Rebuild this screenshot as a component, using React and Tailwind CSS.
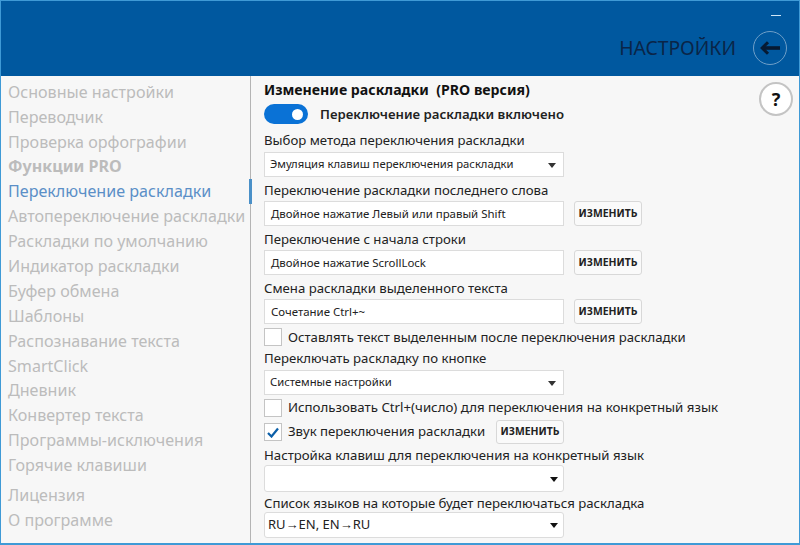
const FONT = "font-['Noto_Sans','Open_Sans',sans-serif]";

function Side({ children, bold, active }) {
  return (
    <div className={`relative h-[24.9px] pl-[7px] flex items-center text-[16.1px] leading-none whitespace-nowrap ${bold ? "font-bold" : ""} ${active ? "text-[#5b8fc7]" : "text-[#bcbcbc]"}`}>
      {children}
      {active && <span className="absolute right-[-2px] top-0 w-[3px] h-[25px] bg-[#4a90c8]" />}
    </div>
  );
}

function Label({ children, h }) {
  return <div className={`flex items-center text-[13.2px] leading-none text-[#222] whitespace-nowrap ${h}`}>{children}</div>;
}

function Caret({ dark }) {
  return (
    <svg width="8" height="5" viewBox="0 0 8 5" className={`absolute top-1/2 -mt-[2px] ${dark ? "right-[5px]" : "right-[7px]"}`}>
      <path d="M0 0h8L4 5z" fill={dark ? "#111" : "#333"} />
    </svg>
  );
}

function Select({ children }) {
  return (
    <div className="relative w-[300px] h-[25px] bg-white border border-[#dcdcdc] flex items-center pl-[5px] text-[11.25px] text-[#222] whitespace-nowrap">
      {children}
      <Caret />
    </div>
  );
}

function Combo({ children, h }) {
  return (
    <div className={`relative w-[300px] bg-white border border-[#dcdcdc] rounded-[3px] flex items-center pl-[3px] text-[13px] text-[#222] whitespace-nowrap ${h}`}>
      {children}
      <Caret dark />
    </div>
  );
}

function Btn({ h = "h-[25px]" }) {
  return (
    <button className={`w-[68px] ${h} bg-[#fafafa] border border-[#d8d8d8] rounded-[3px] flex items-center justify-center text-[10.4px] font-bold text-[#222] shrink-0`}>
      ИЗМЕНИТЬ
    </button>
  );
}

function Field({ children }) {
  return (
    <div className="flex gap-[10px]">
      <div className="w-[300px] h-[25px] bg-white border border-[#dcdcdc] flex items-center pl-[6px] text-[11.45px] text-[#222] whitespace-nowrap">
        {children}
      </div>
      <Btn />
    </div>
  );
}

function Check({ checked }) {
  return (
    <span className="w-[18px] h-[18px] bg-white border border-[#c4c4c4] flex items-center justify-center shrink-0">
      {checked && (
        <svg width="12" height="11" viewBox="0 0 12 11">
          <path d="M1 6l3.5 3.5L11 1.5" fill="none" stroke="#0b5fa8" strokeWidth="2.2" />
        </svg>
      )}
    </span>
  );
}

export default function App() {
  const items = ["Основные настройки", "Переводчик", "Проверка орфографии"];
  const rest = ["Автопереключение раскладки", "Раскладки по умолчанию", "Индикатор раскладки", "Буфер обмена", "Шаблоны", "Распознавание текста", "SmartClick", "Дневник", "Конвертер текста", "Программы-исключения", "Горячие клавиши"];
  return (
    <div className={`${FONT} w-[800px] h-[545px] flex flex-col overflow-hidden bg-[#f7f7f7] border-x border-b-2 border-[#3f9ad6]`}>
      <header className="h-[76px] shrink-0 -mx-px bg-[#00589f] border-t border-[#3f9ad6] relative flex items-center justify-end pr-[13px] pt-[18px]">
        <span className="absolute right-[19px] top-[14px] w-[10px] h-px bg-[#cfe6f7]" />
        <span className="text-[19.3px] leading-none text-[#0a2548] mr-[17px]">НАСТРОЙКИ</span>
        <span className="w-[34px] h-[34px] rounded-full border-[1.5px] border-[#6f9fc8] flex items-center justify-center">
          <svg width="20" height="14" viewBox="0 0 20 14">
            <path d="M8 1.2L2.2 7L8 12.8" fill="none" stroke="#061a33" strokeWidth="3" />
            <path d="M3 7h17" fill="none" stroke="#061a33" strokeWidth="3.6" />
          </svg>
        </span>
      </header>
      <div className="flex flex-1 min-h-0">
        <aside className="w-[250px] shrink-0 border-r border-[#b4b4b4] pt-[3.4px]">
          {items.map((t) => <Side key={t}>{t}</Side>)}
          <Side bold>Функции PRO</Side>
          <Side active>Переключение раскладки</Side>
          {rest.map((t) => <Side key={t}>{t}</Side>)}
          <div className="h-[5px]" />
          <Side>Лицензия</Side>
          <Side>О программе</Side>
        </aside>
        <main className="relative flex-1 pl-[13px] flex flex-col">
          <div className="h-[27px] flex items-center text-[14.15px] font-bold text-[#111] whitespace-nowrap">Изменение раскладки&nbsp; (PRO версия)</div>
          <div className="h-[22px] flex items-center gap-[12px]">
            <span className="w-[44px] h-[20px] rounded-full bg-[#0a72d6] relative shrink-0">
              <span className="absolute right-[5px] top-[4.5px] w-[11px] h-[11px] rounded-full bg-white" />
            </span>
            <span className="pt-[2px] text-[13.2px] font-semibold text-[#222] whitespace-nowrap">Переключение раскладки включено</span>
          </div>
          <Label h="h-[27px] pt-[5px]">Выбор метода переключения раскладки</Label>
          <Select>Эмуляция клавиш переключения раскладки</Select>
          <Label h="h-[24px] pt-[3px]">Переключение раскладки последнего слова</Label>
          <Field>Двойное нажатие Левый или правый Shift</Field>
          <Label h="h-[24px] pt-[3px]">Переключение с начала строки</Label>
          <Field>Двойное нажатие ScrollLock</Field>
          <Label h="h-[24px] pt-[3px]">Смена раскладки выделенного текста</Label>
          <Field>Сочетание Ctrl+~</Field>
          <div className="h-[26px] flex items-center gap-[6px] text-[13.15px] text-[#222] whitespace-nowrap"><Check /><span className="pt-[2px]">Оставлять текст выделенным после переключения раскладки</span></div>
          <Label h="h-[20px] pb-[2px]">Переключать раскладку по кнопке</Label>
          <Select>Системные настройки</Select>
          <div className="h-[25px] flex items-center gap-[6px] text-[13.28px] text-[#222] whitespace-nowrap"><Check />Использовать Ctrl+(число) для переключения на конкретный язык</div>
          <div className="h-[24px] flex items-center text-[13.2px] text-[#222] whitespace-nowrap">
            <Check checked />
            <span className="ml-[6px] w-[208px]">Звук переключения раскладки</span>
            <Btn h="h-[24px]" />
          </div>
          <Label h="h-[21px] pt-[2px]">Настройка клавиш для переключения на конкретный язык</Label>
          <Combo h="h-[27px]" />
          <Label h="h-[20px] pt-[3px]">Список языков на которые будет переключаться раскладка</Label>
          <Combo h="h-[26px]">RU→EN, EN→RU</Combo>
          <span className="absolute right-[6px] top-[6px] w-[34px] h-[34px] rounded-full bg-white border-2 border-[#c4c4c4] flex items-center justify-center text-[18px] font-bold text-[#111]">?</span>
        </main>
      </div>
    </div>
  );
}
